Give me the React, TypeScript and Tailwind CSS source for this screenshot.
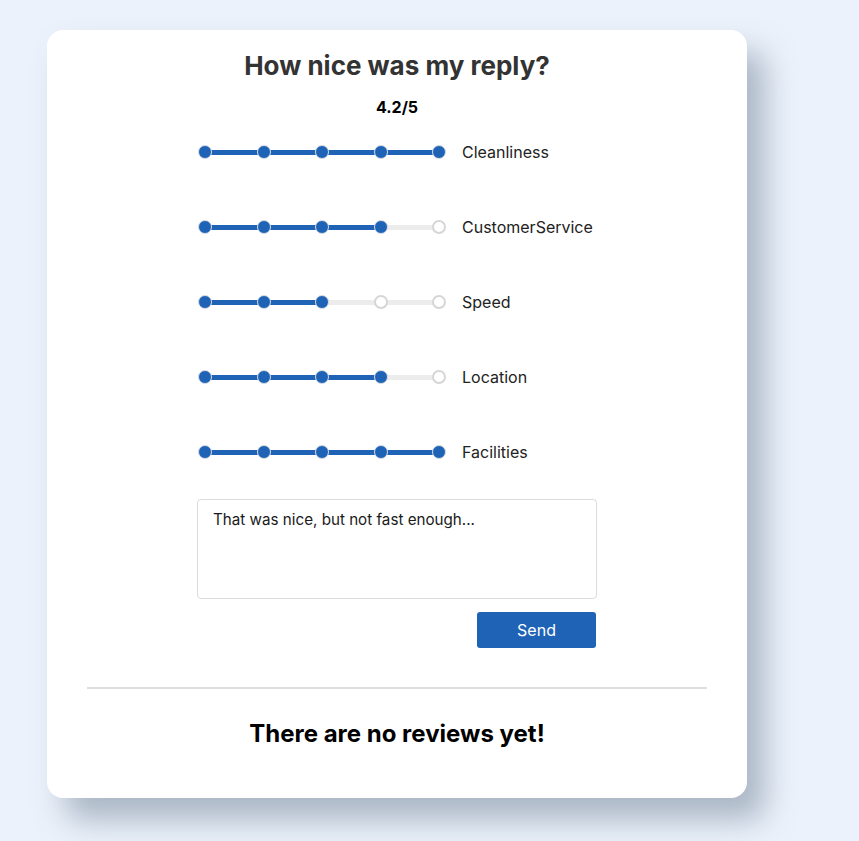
import React from "react";

const ratings = [
  { label: "Cleanliness", value: 5 },
  { label: "CustomerService", value: 4 },
  { label: "Speed", value: 3 },
  { label: "Location", value: 4 },
  { label: "Facilities", value: 5 },
];

function RatingSlider({ value }: { value: number }) {
  const steps = [1, 2, 3, 4, 5];
  return (
    <div className="flex items-center w-[248px] h-[14px]">
      {steps.map((step) => (
        <React.Fragment key={step}>
          {step > 1 && (
            <div
              className={
                step <= value
                  ? "flex-1 h-[5px] bg-[#1f63b6] -mx-[1px]"
                  : "flex-1 h-[5px] bg-[#ececec] -mx-[1px]"
              }
            />
          )}
          <div
            className={
              step <= value
                ? "relative w-[14px] h-[14px] shrink-0 rounded-full bg-[#1f63b6] border-[1.5px] border-[#d9dde3]"
                : "relative w-[14px] h-[14px] shrink-0 rounded-full bg-white border-2 border-[#d6d6d6]"
            }
          />
        </React.Fragment>
      ))}
    </div>
  );
}

export default function App() {
  return (
    <div
      className="min-h-[841px] w-full bg-[#ebf2fb] pt-[30px] pl-[47px]"
      style={{ fontFamily: "Inter, 'Noto Sans', sans-serif" }}
    >
      <div className="w-[700px] bg-white rounded-[16px] shadow-[18px_22px_30px_rgba(110,125,145,0.5)] pt-[20px] pb-[50px] flex flex-col items-center">
        <h2 className="text-[26px] leading-8 font-bold text-[#333]">How nice was my reply?</h2>
        <div className="mt-[15px] text-[16px] leading-5 font-bold text-black">4.2/5</div>

        <div className="w-[400px] mt-[25px] flex flex-col gap-[55px]">
          {ratings.map((r) => (
            <div key={r.label} className="flex items-center h-5">
              <div className="pl-[1px]">
                <RatingSlider value={r.value} />
              </div>
              <span className="ml-[16px] text-[16px] leading-5 text-[#222]">{r.label}</span>
            </div>
          ))}
        </div>

        <textarea
          className="mt-[37px] w-[400px] h-[100px] border border-[#dcdcdc] rounded-[4px] px-[15px] py-[10px] text-[15.2px] leading-5 text-[#1a1a1a] resize-none outline-none"
          defaultValue="That was nice, but not fast enough..."
        />

        <div className="w-[400px] flex justify-end mt-[13px]">
          <button className="w-[119px] h-[36px] mr-[1px] bg-[#1f63b6] text-white text-[16px] rounded-[3px]">
            Send
          </button>
        </div>

        <div className="w-[620px] h-[2px] bg-[#dedede] mt-[39px]" />

        <h3 className="mt-[31px] text-[24px] leading-7 font-bold text-black">There are no reviews yet!</h3>
      </div>
    </div>
  );
}
